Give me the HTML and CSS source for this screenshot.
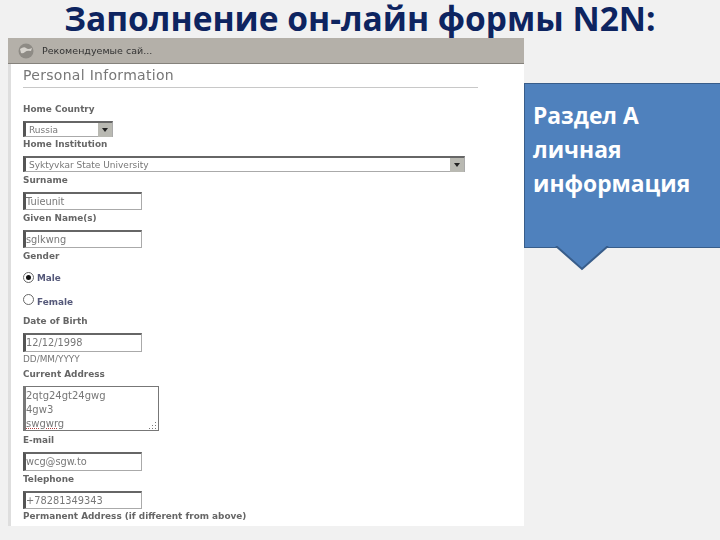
FILE: index.html
```html
<!DOCTYPE html>
<html lang="en">
<head>
    <meta charset="UTF-8">
    <title>Заполнение он-лайн формы N2N</title>
    <link rel="stylesheet" href="styles.css">
</head>
<body>
<h1 class="slide-title">Заполнение он-лайн формы N2N:</h1>
<div class="slide-row">
    <div class="shot">
        <div class="shot-bar">
            <svg class="globe" width="16" height="16" viewBox="0 0 16 16">
                <circle cx="8" cy="8" r="7.5" fill="#8e8b85"/>
                <path d="M2 6 Q6 3 8 5 T14 5 L13 8 Q9 7 7 9 T3 10 Z" fill="#d6d3cd"/>
            </svg>
            <span>Рекомендуемые сай...</span>
        </div>
        <div class="form-body">
            <h2 class="form-title">Personal Information</h2>
            <label class="lbl first">Home Country</label>
            <div class="sel sel-short"><span>Russia</span><i class="sel-btn"></i></div>
            <label class="lbl l-tight">Home Institution</label>
            <div class="sel sel-long"><span>Syktyvkar State University</span><i class="sel-btn"></i></div>
            <label class="lbl">Surname</label>
            <div class="inp">Tuieunit</div>
            <label class="lbl">Given Name(s)</label>
            <div class="inp">sglkwng</div>
            <label class="lbl">Gender</label>
            <div class="radio r-male"><i class="dot on"></i><b>Male</b></div>
            <div class="radio r-female"><i class="dot"></i><b>Female</b></div>
            <label class="lbl">Date of Birth</label>
            <div class="inp inp-tall">12/12/1998</div>
            <div class="hint">DD/MM/YYYY</div>
            <label class="lbl l-addr">Current Address</label>
            <div class="area">
                <div>2qtg24gt24gwg</div>
                <div>4gw3</div>
                <div class="typo">swgwrg</div>
                <svg class="grip" width="10" height="9" viewBox="0 0 10 9">
                    <path d="M8 1h1v1H8zM8 4h1v1H8zM5 4h1v1H5zM8 7h1v1H8zM5 7h1v1H5zM2 7h1v1H2z" fill="#777"/>
                </svg>
            </div>
            <label class="lbl l-addr">E-mail</label>
            <div class="inp inp-tall">wcg@sgw.to</div>
            <label class="lbl">Telephone</label>
            <div class="inp">+78281349343</div>
            <label class="lbl l-last">Permanent Address (if different from above)</label>
        </div>
    </div>
    <div class="callout">
        <p>Раздел А<br>личная<br>информация</p>
        <svg class="callout-tip" width="54" height="25" viewBox="0 0 54 25">
            <path d="M1 0 L27 23 L53 0" fill="#4f81bd" stroke="#385d8a" stroke-width="2"/>
        </svg>
    </div>
</div>
</body>
</html>
```

FILE: styles.css
```css
body{
    margin:0px;
    width:720px;
    height:540px;
    overflow:hidden;
    background-color:#f1f1f1;
    font-family:"Open Sans", sans-serif;
}
.slide-title{
    margin:0px;
    height:38px;
    line-height:36px;
    font-size:33.5px;
    font-weight:700;
    text-align:center;
    color:#0d2460;
    white-space:nowrap;
}
.slide-row{
    display:flex;
    align-items:flex-start;
    padding-left:8px;
}

/* pasted browser screenshot */
.shot{
    width:516px;
    height:488px;
    background-color:white;
    font-family:"DejaVu Sans", sans-serif;
    color:#666;
}
.shot-bar{
    height:26px;
    display:flex;
    align-items:center;
    gap:8px;
    padding-left:10px;
    box-sizing:border-box;
    background-color:#b4b0a9;
    border-bottom:1px solid #85827c;
    font-size:9.5px;
    color:#333;
    filter:blur(0.3px);
}
.form-body{
    height:462px;
    box-sizing:border-box;
    padding:1px 0px 0px 12px;
    border-left:3px solid #dedede;
    filter:blur(0.35px);
}
.form-title{
    margin:0px;
    width:455px;
    height:22px;
    line-height:20px;
    border-bottom:1px solid #c8c8c8;
    font-size:14px;
    font-weight:400;
    color:#777;
    letter-spacing:0.3px;
}
.lbl{
    display:block;
    height:12px;
    line-height:12px;
    margin-top:2px;
    margin-bottom:6px;
    font-size:8.9px;
    font-weight:700;
    color:#666;
    white-space:nowrap;
}
.first{ margin-top:15px; }
.l-tight{ margin-top:1px; }
.l-addr{ margin-top:3px; }
.l-last{ margin-top:1px; }

.sel, .inp, .area{
    box-sizing:border-box;
    background-color:white;
    border-style:solid;
    border-color:#666 #aaa #aaa #555;
    border-width:2px 1px 1px 3px;
    color:#777;
}
.sel{
    display:flex;
    justify-content:space-between;
    align-items:center;
    height:16px;
    font-size:9px;
    padding-left:3px;
}
.sel-short{ width:90px; }
.sel-long{ width:442px; }
.sel-btn{
    width:14px;
    height:14px;
    background-color:#b9b9b2;
    position:relative;
}
.sel-btn:after{
    content:"";
    position:absolute;
    left:4px;
    top:5px;
    border:3px solid transparent;
    border-top:4px solid #222;
    border-bottom:0px;
}
.inp{
    width:119px;
    height:18px;
    line-height:15px;
    font-size:9.8px;
    padding-left:0px;
}
.inp-tall{ height:19px; line-height:16px; }
.radio{
    display:flex;
    align-items:flex-start;
    gap:3px;
    height:23px;
    font-size:8.9px;
    color:#55597a;
}
.radio b{
    margin-top:6px;
}
.r-male{ margin-top:-1px; }
.r-female .dot{ margin-top:4px; }
.r-female b{ margin-top:7px; }
.dot{
    width:9px;
    height:9px;
    margin-top:5px;
    border:1px solid #666;
    border-radius:50%;
    background-color:white;
    position:relative;
}
.dot.on:after{
    content:"";
    position:absolute;
    left:2px;
    top:2px;
    width:5px;
    height:5px;
    border-radius:50%;
    background-color:#111;
}
.hint{
    height:12px;
    line-height:12px;
    margin-top:1px;
    font-size:8.9px;
    color:#777;
}
.area{
    position:relative;
    width:136px;
    height:45px;
    padding:2px 0px 0px 0px;
    overflow:hidden;
    font-size:10px;
    line-height:14px;
    border-width:1px 1px 1px 3px;
    border-color:#777;
}
.typo{
    text-decoration:underline dotted #b04040;
}
.grip{
    position:absolute;
    right:1px;
    bottom:0px;
}

/* blue callout */
.callout{
    position:relative;
    flex:1;
    height:165px;
    box-sizing:border-box;
    margin-top:45px;
    background-color:#4f81bd;
    border:1.5px solid #385d8a;
    border-right:0px;
    color:white;
}
.callout p{
    margin:15px 0px 0px 8px;
    font-size:22.8px;
    font-weight:700;
    line-height:34px;
}
.callout-tip{
    position:absolute;
    left:30px;
    top:162px;
}
```
